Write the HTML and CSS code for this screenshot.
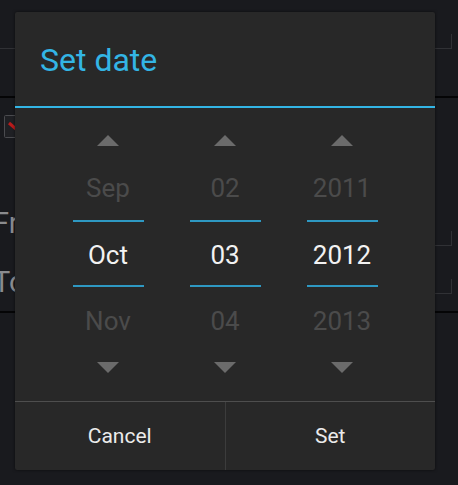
FILE: index.html
```html
<!DOCTYPE html>
<html>
<head>
<meta charset="utf-8">
<link rel="stylesheet" href="styles.css">
</head>
<body>
<div class="screen">
  <div class="bg">
    <div class="top-row"><div class="field top-field"></div></div>
    <div class="black-line"></div>
    <div class="form">
      <div class="check-row">
        <svg class="checkbox" width="23" height="23" viewBox="0 0 23 23">
          <rect x="0.5" y="0.5" width="22" height="22" rx="1" fill="#1f2024" stroke="#4a4b4f"/>
          <path d="M5 8 L12 14" stroke="#b81c1c" stroke-width="3"/>
        </svg>
      </div>
      <div class="form-row row-from">
        <div class="label">From</div>
        <div class="field"></div>
      </div>
      <div class="form-row row-to">
        <div class="label">To</div>
        <div class="field"></div>
      </div>
    </div>
    <div class="black-line"></div>
  </div>

  <div class="dialog">
    <div class="title">Set date</div>
    <div class="title-divider"></div>
    <div class="pickers">
      <div class="picker">
        <div class="arrow-up"></div>
        <div class="item prev">Sep</div>
        <div class="item cur">Oct</div>
        <div class="item next">Nov</div>
        <div class="arrow-down"></div>
      </div>
      <div class="picker">
        <div class="arrow-up"></div>
        <div class="item prev">02</div>
        <div class="item cur">03</div>
        <div class="item next">04</div>
        <div class="arrow-down"></div>
      </div>
      <div class="picker">
        <div class="arrow-up"></div>
        <div class="item prev">2011</div>
        <div class="item cur">2012</div>
        <div class="item next">2013</div>
        <div class="arrow-down"></div>
      </div>
    </div>
    <div class="buttons">
      <div class="btn">Cancel</div>
      <div class="btn btn-right">Set</div>
    </div>
  </div>
</div>
</body>
</html>
```
FILE: styles.css
```css
html, body {
  margin: 0;
  padding: 0;
}
body {
  background: #191a1e;
  font-family: Roboto, "Noto Sans", "Liberation Sans", sans-serif;
  width: 458px;
  height: 485px;
  overflow: hidden;
}
.screen {
  position: relative;
  width: 458px;
  height: 485px;
}

/* background activity */
.top-row {
  height: 49px;
}
.field {
  position: relative;
  flex: 1;
  height: 47px;
  margin-right: 6px;
  border-bottom: 1px solid #303135;
}
.field::after {
  content: "";
  position: absolute;
  right: 0;
  bottom: 0;
  width: 1px;
  height: 14px;
  background: #303135;
}
.top-field {
  height: 48px;
}
.black-line {
  height: 2px;
  background: #050506;
}
.top-row + .black-line {
  margin-top: 47px;
}
.form {
  height: 213px;
}
.check-row {
  padding-top: 17px;
  padding-left: 4px;
  height: 23px;
}
.checkbox {
  display: block;
}
.form-row {
  display: flex;
  height: 48px;
}
.row-from {
  margin-top: 60px;
}
.label {
  width: 120px;
  margin-left: -7px;
  font-size: 29px;
  line-height: 34px;
  color: #8a8b8e;
}
.row-from .label {
  margin-top: 8px;
}
.row-to .label {
  margin-top: 19px;
}

/* dialog */
.dialog {
  position: absolute;
  left: 15px;
  top: 12px;
  width: 420px;
  height: 458px;
  background: #282828;
  border-radius: 2px;
  box-shadow: 0 0 3px rgba(0, 0, 0, 0.6);
  display: flex;
  flex-direction: column;
}
.title {
  padding: 28px 25px 26px;
  height: 40px;
  line-height: 40px;
  font-size: 32px;
  color: #33b5e5;
}
.title-divider {
  height: 2px;
  background: #33b5e5;
}
.pickers {
  height: 293px;
  display: flex;
  justify-content: center;
  gap: 46px;
}
.picker {
  width: 71px;
  display: flex;
  flex-direction: column;
  align-items: stretch;
}
.arrow-up,
.arrow-down {
  width: 0;
  height: 0;
  align-self: center;
  border-left: 11.5px solid transparent;
  border-right: 11.5px solid transparent;
}
.arrow-up {
  margin-top: 27px;
  border-bottom: 11px solid #6b6b6b;
}
.arrow-down {
  margin-top: 25px;
  border-top: 11px solid #6b6b6b;
}
.item {
  text-align: center;
  font-size: 26px;
  line-height: 32px;
  color: #4b4b4b;
  white-space: nowrap;
}
.prev {
  padding: 26px 0 16px;
}
.cur {
  color: #f2f2f2;
  border-top: 2px solid #2e98c2;
  border-bottom: 2px solid #2e98c2;
  padding: 17px 0 14px;
}
.next {
  padding-top: 18px;
}
.buttons {
  flex: 1;
  display: flex;
  border-top: 1px solid #4e4e4e;
}
.btn {
  flex: 1;
  display: flex;
  align-items: center;
  justify-content: center;
  font-size: 21px;
  color: #ebebeb;
}
.btn-right {
  border-left: 1px solid #3c3c3c;
}
```
